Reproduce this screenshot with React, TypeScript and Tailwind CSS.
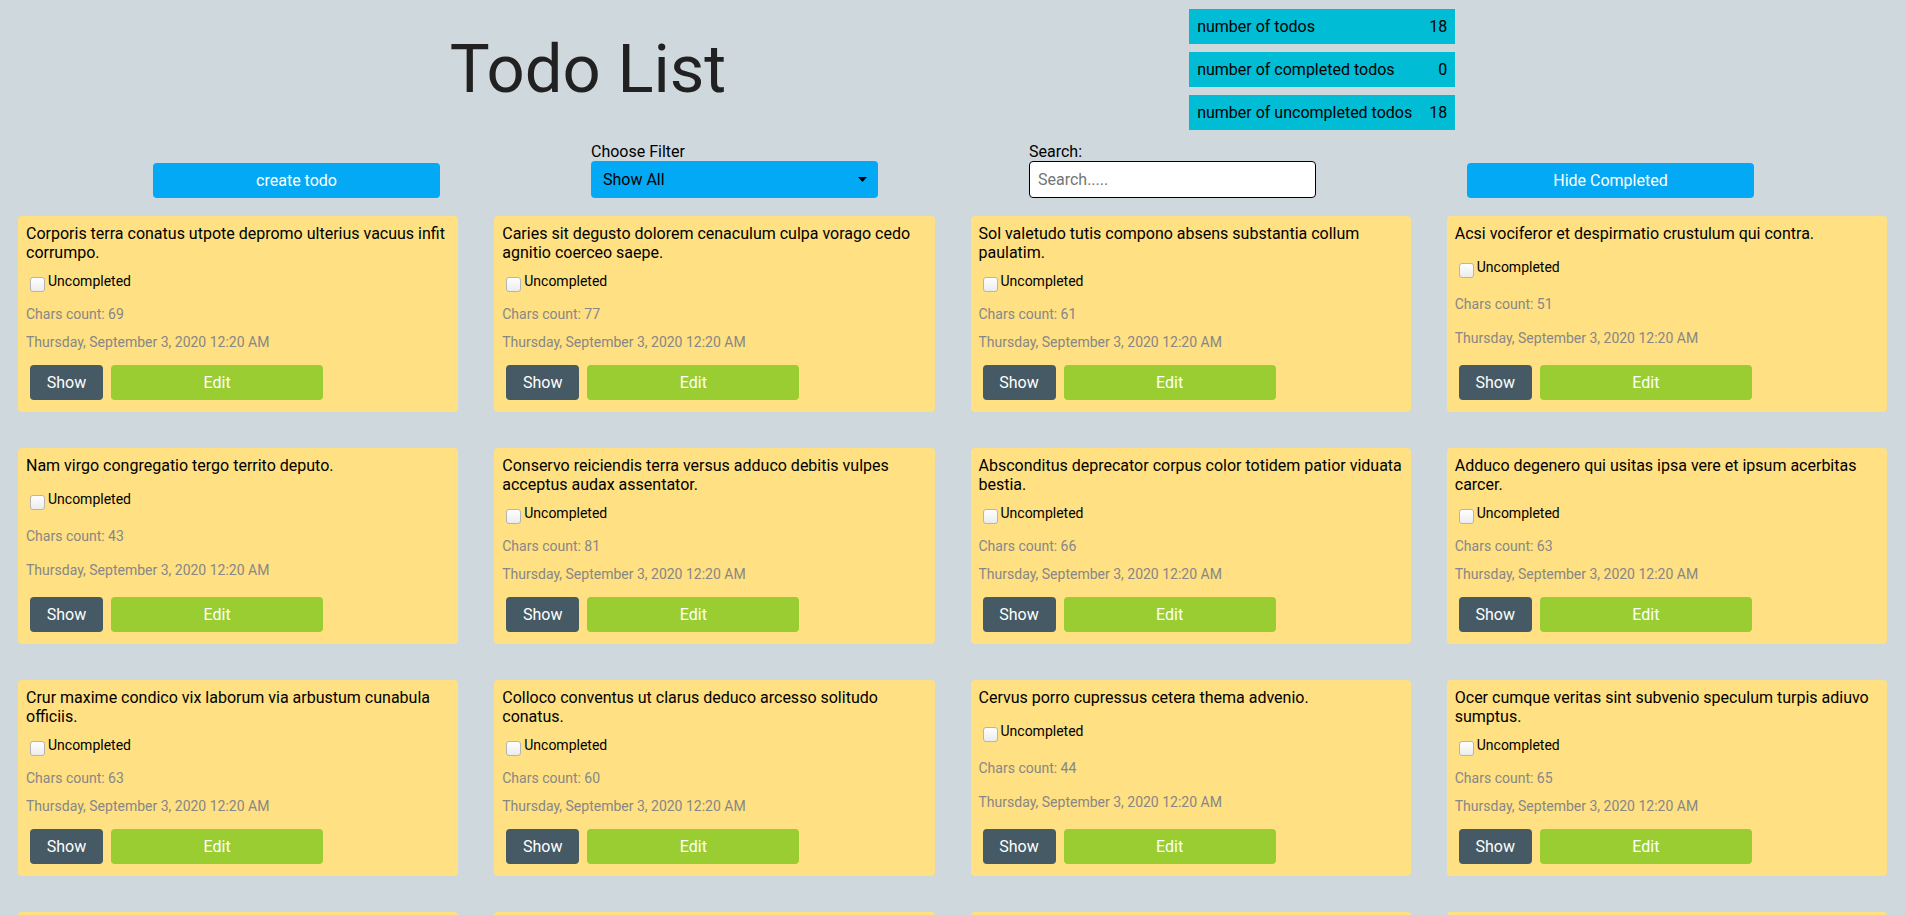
import React, { FC } from "react"

type Todo = {
    title: string
    completed: boolean
}

const todos: Todo[] = [
    { title: "Corporis terra conatus utpote depromo ulterius vacuus infit corrumpo.", completed: false },
    { title: "Caries sit degusto dolorem cenaculum culpa vorago cedo agnitio coerceo saepe.", completed: false },
    { title: "Sol valetudo tutis compono absens substantia collum paulatim.", completed: false },
    { title: "Acsi vociferor et despirmatio crustulum qui contra.", completed: false },
    { title: "Nam virgo congregatio tergo territo deputo.", completed: false },
    { title: "Conservo reiciendis terra versus adduco debitis vulpes acceptus audax assentator.", completed: false },
    { title: "Absconditus deprecator corpus color totidem patior viduata bestia.", completed: false },
    { title: "Adduco degenero qui usitas ipsa vere et ipsum acerbitas carcer.", completed: false },
    { title: "Crur maxime condico vix laborum via arbustum cunabula officiis.", completed: false },
    { title: "Colloco conventus ut clarus deduco arcesso solitudo conatus.", completed: false },
    { title: "Cervus porro cupressus cetera thema advenio.", completed: false },
    { title: "Ocer cumque veritas sint subvenio speculum turpis adiuvo sumptus.", completed: false },
    { title: "Textor vilicus tantum cubicularis aggero tollo depopulo.", completed: false },
    { title: "Vorago cado comparo vulgus studio tristis.", completed: false },
    { title: "Tepesco vicissitudo alveus attero vobis creber cometes.", completed: false },
    { title: "Aestus accusator desolo tamisium vomica sol.", completed: false },
    { title: "Caelestis arx torqueo amplitudo suscipit.", completed: false },
    { title: "Voluptas accendo tersus cilicium aeger cornu sto.", completed: false },
]

const date = "Thursday, September 3, 2020 12:20 AM"

const TodoCard: FC<{ todo: Todo }> = ({ todo }) => {
    return (
        <div className="m-[18px] h-[196px] p-2 rounded-[4px] bg-[#ffe082] flex flex-col justify-between">
            <p className="text-base leading-[19px] text-black">{todo.title}</p>
            <label className="flex items-start h-[20px] text-sm leading-5 text-black">
                <span className="mt-[6px] ml-1 mr-[3px] w-[15px] h-[15px] rounded-[3px] border border-[#b5b5b5] bg-gradient-to-b from-white to-[#ececec]" />
                {todo.completed ? "Completed" : "Uncompleted"}
            </label>
            <p className="h-[24px] pt-1 text-sm leading-5 text-[#878787]">Chars count: {todo.title.length}</p>
            <p className="h-[20px] text-sm leading-5 text-[#878787]">{date}</p>
            <div className="flex">
                <button className="m-1 w-[73px] h-[35px] rounded-[4px] bg-[#455a64] text-white text-base">Show</button>
                <button className="m-1 w-1/2 h-[35px] rounded-[4px] bg-[#9acd32] text-white text-base">Edit</button>
            </div>
        </div>
    )
}

const App: FC = () => {
    const completed = todos.filter(t => t.completed).length
    const stats = [
        ["number of todos", todos.length],
        ["number of completed todos", completed],
        ["number of uncompleted todos", todos.length - completed],
    ]

    return (
        <div className="min-h-screen bg-[#cfd8dc] font-['Roboto',sans-serif]">
            <header className="flex justify-evenly items-center pt-[9px]">
                <h1 className="text-[67px] leading-none text-[#212121]">Todo List</h1>
                <div className="flex flex-col gap-2 w-[266px] ml-[13px]">
                    {stats.map(([label, value]) => (
                        <div key={label} className="flex justify-between items-center h-[35px] px-2 bg-[#00bcd4] text-base text-black">
                            <span>{label}</span>
                            <span>{value}</span>
                        </div>
                    ))}
                </div>
            </header>

            <div className="flex justify-evenly items-end mt-3 pl-[2px]">
                <button className="w-[287px] h-[35px] rounded-[4px] bg-[#03a9f4] text-white text-base">create todo</button>
                <div className="w-[287px] flex flex-col">
                    <span className="text-base leading-[19px] text-black">Choose Filter</span>
                    <div className="relative">
                        <select className="w-full h-[37px] pl-3 rounded-[4px] bg-[#03a9f4] text-base text-black appearance-none outline-none">
                            <option>Show All</option>
                            <option>Completed</option>
                            <option>Uncompleted</option>
                        </select>
                        <svg className="absolute right-[11px] top-[16px] pointer-events-none" width="9" height="5" viewBox="0 0 9 5">
                            <path d="M0 0h9L4.5 5z" fill="#000" />
                        </svg>
                    </div>
                </div>
                <div className="w-[287px] flex flex-col">
                    <span className="text-base leading-[19px] text-black">Search:</span>
                    <input
                        className="w-full h-[37px] px-2 rounded-[4px] border border-black bg-white text-base text-black placeholder:text-[#757575] outline-none"
                        placeholder="Search....."/>
                </div>
                <button className="w-[287px] h-[35px] rounded-[4px] bg-[#03a9f4] text-white text-base">Hide Completed</button>
            </div>

            <div className="grid grid-cols-4">
                {todos.map((todo, i) => (
                    <TodoCard key={i} todo={todo}/>
                ))}
            </div>
        </div>
    )
}

export default App
